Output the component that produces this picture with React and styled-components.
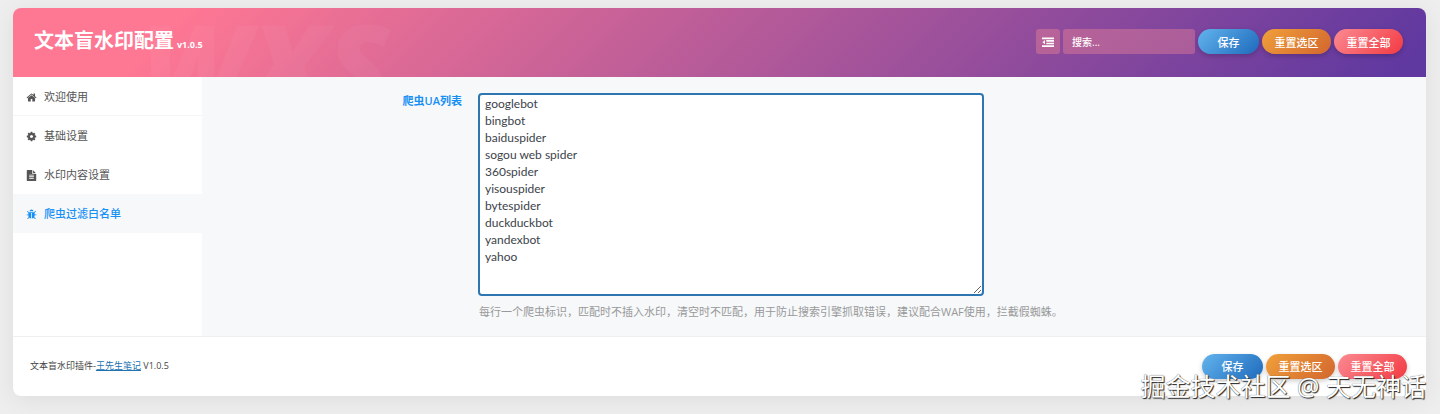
import React from "react";
import styled, { createGlobalStyle } from "styled-components";

const Global = createGlobalStyle`
  * { box-sizing: border-box; }
  body {
    margin: 0;
    background: #eeeeee;
    color: #444444;
    font-family: "Open Sans", "Noto Sans CJK SC", sans-serif;
    font-size: 11px;
    line-height: 16px;
  }
  button, input, textarea { font: inherit; }
`;

const Page = styled.div`
  padding: 8px 14px 18px 13px;
`;

const Card = styled.main`
  position: relative;
  background: #ffffff;
  border-radius: 8px;
  box-shadow: 0 4px 24px rgba(0, 0, 0, 0.07);
`;

const Header = styled.header`
  position: relative;
  display: flex;
  align-items: center;
  justify-content: space-between;
  height: 69px;
  padding: 0 23px 2px 21px;
  overflow: hidden;
  border-radius: 8px 8px 0 0;
  background: linear-gradient(135deg, #fe7793 0%, #fe7793 12%, #5f38a0 98%, #5f38a0 100%);
`;

const Ghost = styled.span`
  position: absolute;
  left: 128px;
  top: 0;
  font: italic 900 116px/110px "Open Sans", sans-serif;
  color: rgba(255, 255, 255, 0.04);
  pointer-events: none;
`;

const Title = styled.h1`
  margin: 0;
  padding-top: 3px;
  color: #ffffff;
  font-size: 20px;
  line-height: 28px;
  font-weight: 700;
`;

const Version = styled.small`
  font-size: 9px;
  margin-left: 3px;
`;

const Tools = styled.div`
  display: flex;
  align-items: center;
  gap: 3px;
`;

const Toggle = styled.button`
  display: flex;
  align-items: center;
  justify-content: center;
  width: 24px;
  height: 25px;
  padding: 0;
  border: 0;
  border-radius: 3px;
  background: rgba(255, 140, 150, 0.36);
  color: #ffffff;
`;

const Search = styled.input`
  width: 132px;
  height: 25px;
  padding: 0 9px;
  border: 0;
  border-radius: 3px;
  background: rgba(255, 140, 150, 0.36);
  color: #ffffff;
  font-size: 10px;
  font-weight: 500;
  &::placeholder { color: #ffffff; opacity: 1; }
`;

const tones = {
  blue: ["#63b3ed", "#1e6abc"],
  orange: ["#f0a03a", "#d2662f"],
  red: ["#fb8a92", "#f33a42"],
};

const Pill = styled.button`
  width: ${(p) => (p.$tone === "blue" ? 61 : 69)}px;
  height: 25px;
  padding: 2px 0 0;
  border: 0;
  border-radius: 13px;
  background: linear-gradient(135deg, ${(p) => tones[p.$tone][0]}, ${(p) => tones[p.$tone][1]});
  box-shadow: 0 2px 5px rgba(0, 0, 0, 0.2);
  color: #ffffff;
  font-size: 11px;
  font-weight: 500;
`;

const Body = styled.div`
  display: flex;
  min-height: 259px;
  background: #f6f8fa;
`;

const Nav = styled.nav`
  flex: 0 0 189px;
  background: #ffffff;
`;

const NavLink = styled.a`
  display: flex;
  align-items: center;
  gap: 7px;
  height: 39px;
  padding: 2px 13px 0;
  border-bottom: 1px solid ${(p) => (p.$ruled ? "#f5f5f5" : "transparent")};
  background: ${(p) => (p.$active ? "#f6f8fa" : "transparent")};
  color: ${(p) => (p.$active ? "#1790f5" : "#555555")};
  font-weight: ${(p) => (p.$active ? 500 : 400)};
  text-decoration: none;
`;

const Field = styled.div`
  flex: 1;
  display: flex;
  gap: 16px;
  padding: 16px;
`;

const Label = styled.label`
  flex: 0 0 244px;
  color: #1790f5;
  font-weight: 600;
  text-align: right;
`;

const Control = styled.div`
  flex: 1;
`;

const Area = styled.textarea`
  display: block;
  width: 506px;
  max-width: 100%;
  height: 203px;
  padding: 0 5px;
  border: 2px solid #2d76b2;
  border-radius: 4px;
  outline: 0;
  background: #ffffff;
  color: #3c434a;
  font-family: Lato, "Noto Sans CJK SC", sans-serif;
  font-size: 12px;
  line-height: 17px;
`;

const Hint = styled.p`
  margin: 8px 0 0 1px;
  color: #999999;
`;

const Footer = styled.footer`
  display: flex;
  align-items: center;
  justify-content: space-between;
  height: 60px;
  padding: 0 19px 1px 17px;
  border-top: 1px solid #f0f0f0;
  font-size: 9px;
`;

const FooterLink = styled.a`
  color: #2271b1;
`;

const Credit = styled.div`
  position: absolute;
  right: 0;
  bottom: -6px;
  color: #ffffff;
  font-size: 25px;
  line-height: 32px;
  white-space: nowrap;
  text-shadow: 1px 1px 1px #222222, 0 0 1px #444444;
  pointer-events: none;
`;

const paths = {
  home: "M1472 992v480q0 26-19 45t-45 19h-384v-384h-256v384h-384q-26 0-45-19t-19-45v-480q0-1 .5-3t.5-3l575-474 575 474q1 2 1 6zm223-69l-62 74q-8 9-21 11h-3q-13 0-21-7l-692-577-692 577q-12 8-24 7-13-2-21-11l-62-74q-8-10-7-23.5t11-21.5l719-599q32-26 76-26t76 26l244 204v-195q0-14 9-23t23-9h192q14 0 23 9t9 23v408l219 182q10 8 11 21.5t-7 23.5z",
  cog: "M1152 896q0-106-75-181t-181-75-181 75-75 181 75 181 181 75 181-75 75-181zm512-109v222q0 12-8 23t-20 13l-185 28q-19 54-39 91 35 50 107 138 10 12 10 25t-9 23q-27 37-99 108t-94 71q-12 0-26-9l-138-108q-44 23-91 38-16 136-29 186-7 28-36 28h-222q-14 0-24.5-8.5t-11.5-21.5l-28-184q-49-16-90-37l-141 107q-10 9-25 9-14 0-25-11-126-114-165-168-7-10-7-23 0-12 8-23 15-21 51-66.5t54-70.5q-27-50-41-99l-183-27q-13-2-21-12.5t-8-23.5v-222q0-12 8-23t19-13l186-28q14-46 39-92-40-57-107-138-10-12-10-24 0-10 9-23 26-36 98.5-107.5t94.5-71.5q13 0 26 10l138 107q44-23 91-38 16-136 29-186 7-28 36-28h222q14 0 24.5 8.5t11.5 21.5l28 184q49 16 90 37l142-107q9-9 24-9 13 0 25 10 129 119 165 170 7 8 7 22 0 12-8 23-15 21-51 66.5t-54 70.5q26 50 41 98l183 28q13 2 21 12.5t8 23.5z",
  file: "M1596 476q14 14 28 36h-472v-472q22 14 36 28zm-476 164h544v1056q0 40-28 68t-68 28h-1344q-40 0-68-28t-28-68v-1600q0-40 28-68t68-28h800v544q0 40 28 68t68 28zm160 736v-64q0-14-9-23t-23-9h-704q-14 0-23 9t-9 23v64q0 14 9 23t23 9h704q14 0 23-9t9-23zm0-256v-64q0-14-9-23t-23-9h-704q-14 0-23 9t-9 23v64q0 14 9 23t23 9h704q14 0 23-9t9-23zm0-256v-64q0-14-9-23t-23-9h-704q-14 0-23 9t-9 23v64q0 14 9 23t23 9h704q14 0 23-9t9-23z",
  bug: "M1696 960q0 26-19 45t-45 19h-224q0 171-67 290l208 209q19 19 19 45t-19 45q-18 19-45 19t-45-19l-198-197q-5 5-15 13t-42 28.5-65 36.5-82 29-97 13v-896h-128v896q-51 0-101.5-13.5t-87-33-66-39-43.5-32.5l-15-14-183 207q-20 21-48 21-24 0-43-16-19-18-20.5-44.5t15.5-46.5l202-227q-58-114-58-274h-224q-26 0-45-19t-19-45 19-45 45-19h224v-294l-173-173q-19-19-19-45t19-45 45-19 45 19l173 173h844l173-173q19-19 45-19t45 19 19 45-19 45l-173 173v294h224q26 0 45 19t19 45zm-480-576h-640q0-133 93.5-226.5t226.5-93.5 226.5 93.5 93.5 226.5z",
  outdent: "M0 224h1792v256H0zM640 608h1152v256H640zM640 992h1152v256H640zM0 1376h1792v256H0zM448 608v640L64 928z",
};

function Icon({ name, size = 11 }) {
  return (
    <svg width={size} height={size} viewBox="0 0 1792 1792" fill="currentColor" aria-hidden="true">
      <path d={paths[name]} />
    </svg>
  );
}

const items = [
  { label: "欢迎使用", icon: "home", ruled: true },
  { label: "基础设置", icon: "cog" },
  { label: "水印内容设置", icon: "file" },
  { label: "爬虫过滤白名单", icon: "bug", active: true },
];

const agents = [
  "googlebot", "bingbot", "baiduspider", "sogou web spider", "360spider",
  "yisouspider", "bytespider", "duckduckbot", "yandexbot", "yahoo",
].join("\n");

function Actions() {
  return (
    <>
      <Pill type="submit" $tone="blue">保存</Pill>
      <Pill type="button" $tone="orange">重置选区</Pill>
      <Pill type="button" $tone="red">重置全部</Pill>
    </>
  );
}

export default function App() {
  return (
    <Page>
      <Global />
      <Card>
        <Header>
          <Ghost aria-hidden="true">WXS</Ghost>
          <Title>文本盲水印配置<Version>v1.0.5</Version></Title>
          <Tools>
            <Toggle type="button" aria-label="展开全部"><Icon name="outdent" size={12} /></Toggle>
            <Search type="search" aria-label="搜索" placeholder="搜索..." />
            <Actions />
          </Tools>
        </Header>
        <Body>
          <Nav>
            {items.map(({ label, icon, ruled, active }) => (
              <NavLink key={label} href="#" $ruled={ruled} $active={active}>
                <Icon name={icon} />{label}
              </NavLink>
            ))}
          </Nav>
          <Field>
            <Label htmlFor="agents">爬虫UA列表</Label>
            <Control>
              <Area id="agents" defaultValue={agents} />
              <Hint>每行一个爬虫标识，匹配时不插入水印，清空时不匹配，用于防止搜索引擎抓取错误，建议配合WAF使用，拦截假蜘蛛。</Hint>
            </Control>
          </Field>
        </Body>
        <Footer>
          <span>文本盲水印插件-<FooterLink href="#">王先生笔记</FooterLink> V1.0.5</span>
          <Tools><Actions /></Tools>
        </Footer>
        <Credit>掘金技术社区 @ 天无神话</Credit>
      </Card>
    </Page>
  );
}
